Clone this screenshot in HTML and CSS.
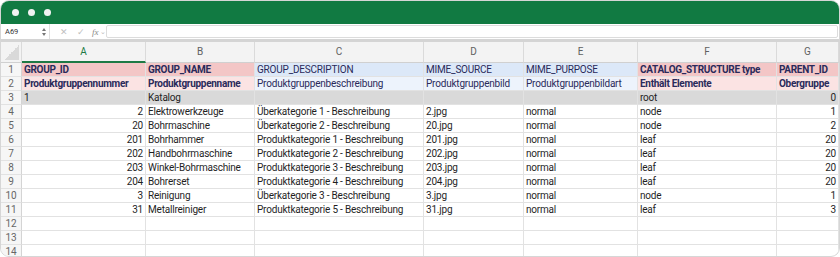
FILE: index.html
```html
<!DOCTYPE html>
<html lang="de">
<head>
    <meta charset="UTF-8">
    <title>Katalog</title>
    <link rel="stylesheet" href="styles.css">
</head>
<body>
<div class="window">

    <!-- Title bar -->
    <div class="titlebar">
        <span class="dot"></span>
        <span class="dot"></span>
        <span class="dot"></span>
    </div>

    <!-- Formula bar -->
    <div class="formulabar">
        <div class="namebox">
            <span>A69</span>
            <span class="spin"><i class="up"></i><i class="down"></i></span>
        </div>
        <div class="fx-tools">
            <span class="tool">&#10005;</span>
            <span class="tool">&#10003;</span>
            <span class="fx">fx</span>
            <span class="chev">&#8964;</span>
        </div>
        <div class="formula-input"></div>
    </div>

    <!-- Sheet -->
    <div class="sheet">
        <div class="row colheads">
            <div class="cell corner"></div>
            <div class="cell active">A</div>
            <div class="cell">B</div>
            <div class="cell">C</div>
            <div class="cell">D</div>
            <div class="cell">E</div>
            <div class="cell">F</div>
            <div class="cell">G</div>
        </div>

        <div class="row">
            <div class="cell num">1</div>
            <div class="cell red1 b">GROUP_ID</div>
            <div class="cell red1 b">GROUP_NAME</div>
            <div class="cell blue1">GROUP_DESCRIPTION</div>
            <div class="cell blue1">MIME_SOURCE</div>
            <div class="cell blue1">MIME_PURPOSE</div>
            <div class="cell red1 b">CATALOG_STRUCTURE type</div>
            <div class="cell red1 b">PARENT_ID</div>
        </div>
        <div class="row">
            <div class="cell num">2</div>
            <div class="cell red2 b">Produktgruppennummer</div>
            <div class="cell red2 b">Produktgruppenname</div>
            <div class="cell blue2">Produktgruppenbeschreibung</div>
            <div class="cell blue2">Produktgruppenbild</div>
            <div class="cell blue2">Produktgruppenbildart</div>
            <div class="cell red2 b">Enthält Elemente</div>
            <div class="cell red2 b">Obergruppe</div>
        </div>
        <div class="row">
            <div class="cell num">3</div>
            <div class="cell grey">1</div>
            <div class="cell grey">Katalog</div>
            <div class="cell grey"></div>
            <div class="cell grey"></div>
            <div class="cell grey"></div>
            <div class="cell grey">root</div>
            <div class="cell grey r">0</div>
        </div>
        <div class="row">
            <div class="cell num">4</div>
            <div class="cell r">2</div>
            <div class="cell">Elektrowerkzeuge</div>
            <div class="cell">Überkategorie 1 - Beschreibung</div>
            <div class="cell">2.jpg</div>
            <div class="cell">normal</div>
            <div class="cell">node</div>
            <div class="cell r">1</div>
        </div>
        <div class="row">
            <div class="cell num">5</div>
            <div class="cell r">20</div>
            <div class="cell">Bohrmaschine</div>
            <div class="cell">Überkategorie 2 - Beschreibung</div>
            <div class="cell">20.jpg</div>
            <div class="cell">normal</div>
            <div class="cell">node</div>
            <div class="cell r">2</div>
        </div>
        <div class="row">
            <div class="cell num">6</div>
            <div class="cell r">201</div>
            <div class="cell">Bohrhammer</div>
            <div class="cell">Produktkategorie 1 - Beschreibung</div>
            <div class="cell">201.jpg</div>
            <div class="cell">normal</div>
            <div class="cell">leaf</div>
            <div class="cell r">20</div>
        </div>
        <div class="row">
            <div class="cell num">7</div>
            <div class="cell r">202</div>
            <div class="cell">Handbohrmaschine</div>
            <div class="cell">Produktkategorie 2 - Beschreibung</div>
            <div class="cell">202.jpg</div>
            <div class="cell">normal</div>
            <div class="cell">leaf</div>
            <div class="cell r">20</div>
        </div>
        <div class="row">
            <div class="cell num">8</div>
            <div class="cell r">203</div>
            <div class="cell">Winkel-Bohrmaschine</div>
            <div class="cell">Produktkategorie 3 - Beschreibung</div>
            <div class="cell">203.jpg</div>
            <div class="cell">normal</div>
            <div class="cell">leaf</div>
            <div class="cell r">20</div>
        </div>
        <div class="row">
            <div class="cell num">9</div>
            <div class="cell r">204</div>
            <div class="cell">Bohrerset</div>
            <div class="cell">Produktkategorie 4 - Beschreibung</div>
            <div class="cell">204.jpg</div>
            <div class="cell">normal</div>
            <div class="cell">leaf</div>
            <div class="cell r">20</div>
        </div>
        <div class="row">
            <div class="cell num">10</div>
            <div class="cell r">3</div>
            <div class="cell">Reinigung</div>
            <div class="cell">Überkategorie 3 - Beschreibung</div>
            <div class="cell">3.jpg</div>
            <div class="cell">normal</div>
            <div class="cell">node</div>
            <div class="cell r">1</div>
        </div>
        <div class="row">
            <div class="cell num">11</div>
            <div class="cell r">31</div>
            <div class="cell">Metallreiniger</div>
            <div class="cell">Produktkategorie 5 - Beschreibung</div>
            <div class="cell">31.jpg</div>
            <div class="cell">normal</div>
            <div class="cell">leaf</div>
            <div class="cell r">3</div>
        </div>
        <div class="row">
            <div class="cell num">12</div>
            <div class="cell"></div><div class="cell"></div><div class="cell"></div>
            <div class="cell"></div><div class="cell"></div><div class="cell"></div><div class="cell"></div>
        </div>
        <div class="row">
            <div class="cell num">13</div>
            <div class="cell"></div><div class="cell"></div><div class="cell"></div>
            <div class="cell"></div><div class="cell"></div><div class="cell"></div><div class="cell"></div>
        </div>
        <div class="row">
            <div class="cell num">14</div>
            <div class="cell"></div><div class="cell"></div><div class="cell"></div>
            <div class="cell"></div><div class="cell"></div><div class="cell"></div><div class="cell"></div>
        </div>
    </div>
</div>
</body>
</html>
```

FILE: styles.css
```css
body {
    margin: 0;
    background: #ffffff;
    font-family: 'Roboto', 'Liberation Sans', sans-serif;
}

.window {
    width: 840px;
    height: 257px;
    box-sizing: border-box;
    border: 1px solid #d6d6d6;
    border-radius: 9px;
    overflow: hidden;
    background: #ffffff;
}

/* Green title bar */
.titlebar {
    height: 23px;
    background: #117a42;
    display: flex;
    align-items: center;
    gap: 9px;
    padding-left: 11px;
}

.dot {
    width: 7px;
    height: 7px;
    border-radius: 50%;
    background: #f2f2f2;
}

/* Formula bar */
.formulabar {
    height: 15px;
    display: flex;
    align-items: center;
    border-bottom: 3px solid #d4d4d4;
    padding-right: 1px;
}

.namebox {
    width: 49px;
    height: 15px;
    display: flex;
    align-items: center;
    justify-content: space-between;
    font-size: 7.5px;
    color: #333;
    padding-left: 4px;
    box-sizing: border-box;
    border-right: 1px solid #e0e0e0;
}

/* little up/down arrows next to the name box */
.spin {
    display: flex;
    flex-direction: column;
    gap: 2px;
    padding-right: 3px;
}

.spin i {
    width: 0;
    height: 0;
    border-left: 2px solid transparent;
    border-right: 2px solid transparent;
}

.spin .up { border-bottom: 3px solid #777; }
.spin .down { border-top: 3px solid #777; }

.fx-tools {
    width: 56px;
    display: flex;
    align-items: center;
    gap: 9px;
    padding-left: 10px;
    box-sizing: border-box;
    color: #c0c0c0;
    font-size: 9px;
}

.fx {
    font-family: 'Liberation Serif', serif;
    font-style: italic;
    color: #888;
    font-size: 9px;
    margin-left: -2px;
}

.chev {
    font-size: 7px;
    margin-left: -8px;
    color: #bbb;
}

.formula-input {
    flex: 1;
    height: 11px;
    border: 1px solid #dcdcdc;
    border-radius: 2px;
}

/* Sheet grid */
.row {
    display: grid;
    grid-template-columns: 21px 124px 109px 169px 100px 114px 139px 62px;
    height: 14px;
}

.cell {
    box-sizing: border-box;
    height: 100%;
    border-right: 1px solid #e2e2e2;
    border-bottom: 1px solid #e2e2e2;
    font-size: 10px;
    line-height: 13px;
    letter-spacing: -0.2px;
    padding: 0 2px;
    color: #1f1f1f;
    white-space: nowrap;
    overflow: hidden;
}

.colheads {
    height: 21px;
}

.colheads .cell {
    background: #f3f3f3;
    color: #606060;
    text-align: center;
    line-height: 20px;
    letter-spacing: 0;
    border-right-color: #dadada;
    border-bottom: 1px solid #d0d0d0;
}

.colheads .active {
    color: #1d7a45;
    border-bottom: 2px solid #1d7a45;
}

.colheads .corner {
    background: #f3f3f3 linear-gradient(to top left, #d9d9d9 50%, transparent 50%) no-repeat 3px 3px / 15px 15px;
}

.num {
    background: #f6f6f6;
    color: #666;
    text-align: center;
    letter-spacing: 0;
    border-right-color: #d4d4d4;
}

.r { text-align: right; }
.b { font-weight: bold; letter-spacing: -0.3px; }

.red1 { background: #f3c6c6; color: #2a2a5a; }
.red2 { background: #fbe3e3; color: #2a2a5a; }
.blue1 { background: #dce8f8; color: #2a2a5a; }
.blue2 { background: #edf3fc; color: #2a2a5a; }
.grey { background: #d9d9d9; }
```
